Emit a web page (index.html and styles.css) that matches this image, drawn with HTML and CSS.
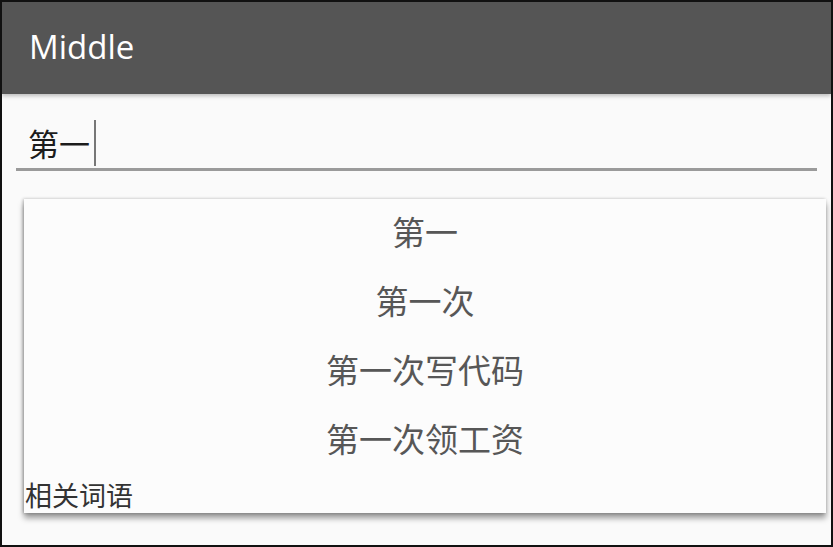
FILE: index.html
```html
<!DOCTYPE html>
<html lang="zh-CN">
<head>
    <meta charset="UTF-8">
    <meta name="viewport" content="width=device-width, initial-scale=1.0">
    <title>Middle</title>
    <link rel="stylesheet" href="styles.css">
</head>
<body>

    <div class="frame">
        <div class="toolbar">
            <span class="title">Middle</span>
        </div>

        <div class="field">
            <span class="value">第一</span><span class="cursor"></span>
        </div>

        <div class="popup">
            <div class="item">第一</div>
            <div class="item">第一次</div>
            <div class="item">第一次写代码</div>
            <div class="item">第一次领工资</div>
            <div class="label">相关词语</div>
        </div>
    </div>

</body>
</html>
```

FILE: styles.css
```css
body {
    margin: 0;
    background: #fafafa;
    font-family: "Noto Sans CJK SC", "Noto Sans", sans-serif;
}
.frame {
    box-sizing: border-box;
    width: 833px;
    height: 547px;
    border: 2px solid #111;
    background: #fafafa;
    overflow: hidden;
}
.toolbar {
    height: 92px;
    background: #555555;
    display: flex;
    align-items: center;
    padding-left: 27px;
    box-shadow: 0 2px 4px rgba(0, 0, 0, 0.25);
    position: relative;
}
.title {
    color: #fff;
    font-family: "Open Sans", "Noto Sans", sans-serif;
    font-size: 33px;
    margin-top: -4px;
}
.field {
    margin: 26px 14px 0;
    height: 48px;
    border-bottom: 3px solid #9a9a9a;
    display: flex;
    align-items: center;
    padding-left: 12px;
}
.value {
    font-size: 31px;
    color: #1c1c1c;
    line-height: 1;
    margin-top: -3px;
}
.cursor {
    width: 2px;
    height: 46px;
    background: #777;
    margin-left: 4px;
    margin-top: -2px;
}
.popup {
    margin: 28px 5px 0 22px;
    height: 314px;
    background: #fcfcfc;
    box-shadow: 0 5px 6px rgba(0, 0, 0, 0.4), -1px 0 3px rgba(0, 0, 0, 0.25);
}
.item {
    height: 69px;
    display: flex;
    align-items: center;
    justify-content: center;
    font-size: 33px;
    line-height: 1;
    padding-bottom: 5px;
    box-sizing: border-box;
    color: #575757;
}
.label {
    height: 38px;
    display: flex;
    align-items: center;
    padding-left: 1px;
    font-size: 27px;
    color: #333;
}
```
